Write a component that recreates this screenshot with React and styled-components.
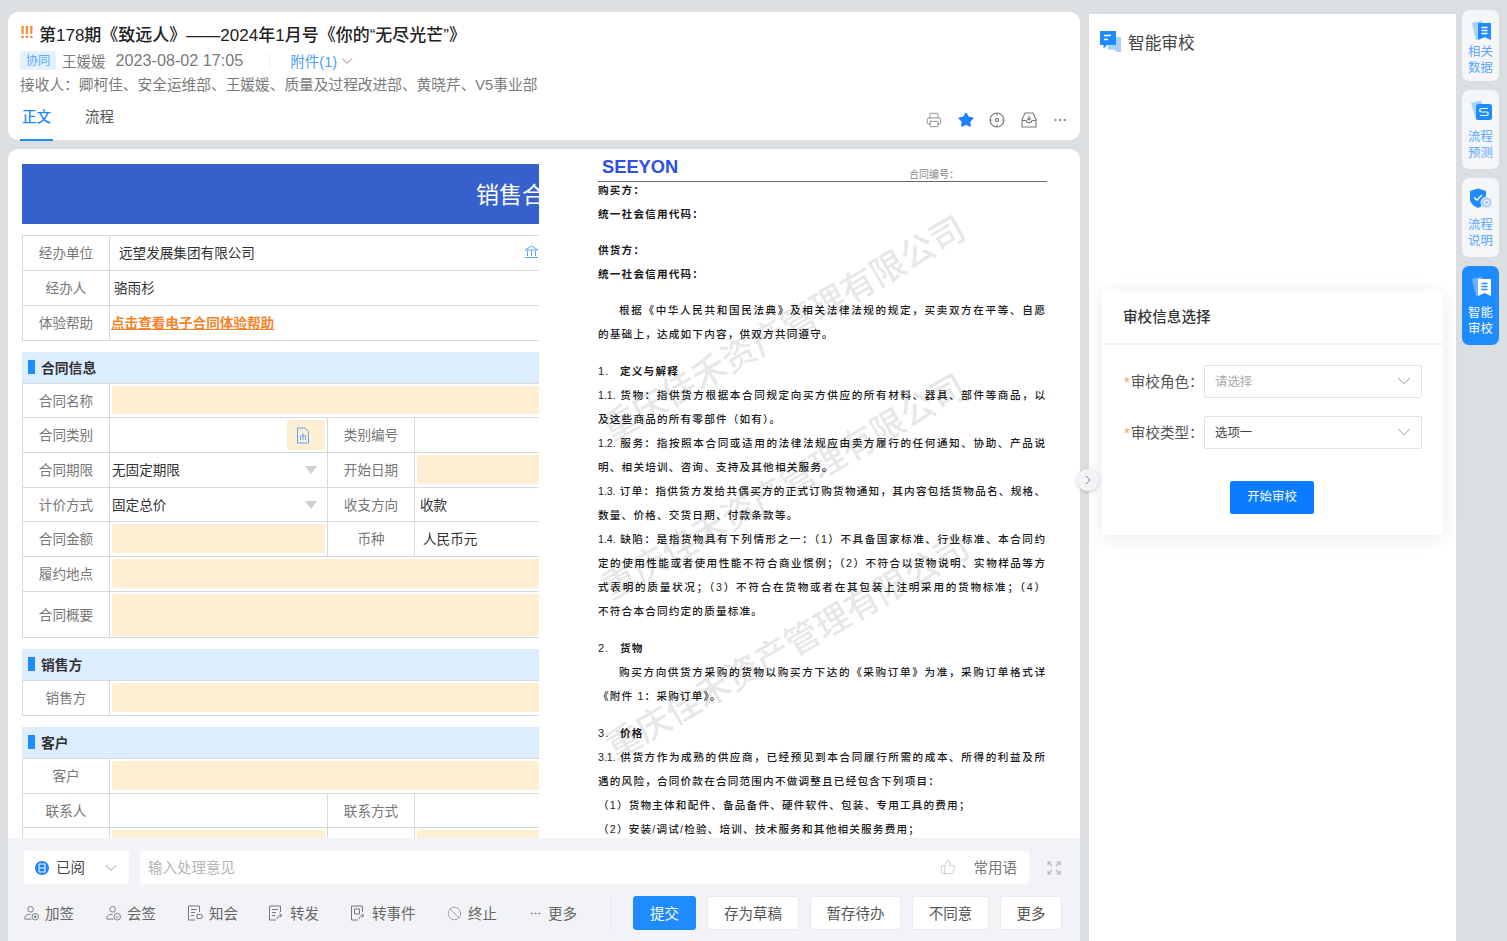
import React from "react";
import styled, { createGlobalStyle } from "styled-components";
import { Printer, Star, Ellipsis, ChevronDown, ChevronRight, ThumbsUp, Ban } from "lucide-react";

const GlobalStyle = createGlobalStyle`
  html, body { margin: 0; padding: 0; height: 100%; overflow: hidden; }
  body { font-family: "Liberation Sans", "Noto Sans CJK SC", sans-serif; background: #dcdfe2; color: #333; }
  * { box-sizing: border-box; }
`;

const Page = styled.div`
  display: flex;
  height: 941px;
  width: 1507px;
  padding-left: 8px;
  overflow: hidden;
  background: #dcdfe2;
`;

const Main = styled.div`
  display: flex;
  flex-direction: column;
  width: 1072px;
  height: 100%;
  padding-top: 12px;
  flex: none;
`;

const Header = styled.header`
  position: relative;
  height: 128px;
  flex: none;
  background: #fff;
  border-radius: 10px;
  padding: 11px 12px 0;
`;

const TitleRow = styled.div`
  display: flex;
  align-items: center;
  gap: 8px;
  height: 20px;
`;

const Bangs = styled.span`
  width: 11px;
  font-size: 16px;
  font-weight: 700;
  letter-spacing: -1px;
  color: #f5882a;
  line-height: 1;
`;

const Title = styled.h1`
  margin: 0;
  font-size: 17px;
  font-weight: 500;
  color: #222;
  white-space: nowrap;
`;

const MetaRow = styled.div`
  display: flex;
  align-items: center;
  height: 19px;
  margin-top: 8px;
  font-size: 14.5px;
  color: #7a7a7a;
`;

const Tag = styled.span`
  width: 36px;
  height: 19px;
  margin-right: 6px;
  background: #e4f1ff;
  color: #5aa6ff;
  border-radius: 2px;
  font-size: 12.3px;
  line-height: 21px;
  text-align: center;
`;

const MetaDate = styled.span`
  margin-left: 10px;
  font-size: 16.2px;
`;

const MetaDivider = styled.span`
  width: 1px;
  height: 15px;
  margin: 0 20px 0 26px;
  background: #eceef1;
`;

const AttachLink = styled.span`
  display: flex;
  align-items: center;
  gap: 1px;
  color: #4c9dff;
`;

const Receivers = styled.div`
  margin-top: 5px;
  height: 20px;
  font-size: 14.7px;
  line-height: 20px;
  color: #7a7a7a;
  white-space: nowrap;
`;

const Tabs = styled.nav`
  display: flex;
  gap: 34px;
  margin-top: 12px;
  padding-left: 2px;
`;

const Tab = styled.span`
  position: relative;
  font-size: 14.5px;
  line-height: 20px;
  color: ${(props) => (props.active ? "#1e8bff" : "#555")};
  font-weight: ${(props) => (props.active ? 500 : 400)};

  &::after {
    content: "";
    display: ${(props) => (props.active ? "block" : "none")};
    position: absolute;
    left: -2px;
    right: -2px;
    top: 32px;
    height: 2px;
    background: #1e8bff;
  }
`;

const HeaderTools = styled.div`
  position: absolute;
  right: 12px;
  bottom: 12px;
  display: flex;
  align-items: center;
  gap: 15.5px;
  color: #777;
`;

const DocPanel = styled.section`
  flex: 1;
  min-height: 0;
  margin-top: 9px;
  background: #fff;
  border-radius: 10px 10px 0 0;
  display: flex;
  flex-direction: column;
  overflow: hidden;
`;

const DocBody = styled.div`
  flex: 1;
  min-height: 0;
  display: flex;
  overflow: hidden;
`;

const FormPane = styled.div`
  width: 531px;
  flex: none;
  padding: 15px 0 0 14px;
  overflow: hidden;
`;

const FormInner = styled.div`
  width: 530px;
`;

const Banner = styled.div`
  height: 60px;
  background: #3661cc;
  color: #fff;
  font-size: 23px;
  line-height: 63px;
  padding-left: 454px;
  white-space: nowrap;
  margin-bottom: 11px;
`;

const Table = styled.div`
  border-left: 1px solid #d9d9d9;
  border-top: ${(props) => (props.plain ? "1px solid #d9d9d9" : "none")};
  margin-bottom: ${(props) => props.gap || 0}px;
`;

const Row = styled.div`
  display: grid;
  grid-template-columns: ${(props) => (props.split ? "87px 218px 87px 1fr" : "87px 1fr")};
  height: ${(props) => props.h || 35}px;
  border-bottom: 1px solid #d9d9d9;
`;

const Label = styled.div`
  display: flex;
  align-items: center;
  justify-content: center;
  padding-bottom: 2px;
  border-right: 1px solid #d9d9d9;
  font-size: 13.6px;
  color: #777;
`;

const Value = styled.div`
  display: flex;
  align-items: center;
  justify-content: space-between;
  padding: 0 ${(props) => props.pr ?? 2}px 2px ${(props) => props.pl ?? 2}px;
  font-size: 13.6px;
  color: #333;
  border-right: ${(props) => (props.divider ? "1px solid #d9d9d9" : "none")};
  min-width: 0;
`;

const Fill = styled.div`
  flex: 1;
  align-self: stretch;
  margin: 2px 0 ${(props) => (props.tall ? -1 : 1)}px;
  background: #feefd3;
  border-radius: 3px;
`;

const PickerFill = styled.div`
  width: 38px;
  height: 30px;
  margin-top: 2px;
  background: #feefd3;
  border-radius: 3px;
  display: flex;
  align-items: center;
  justify-content: center;
  padding-right: 6px;
`;

const Caret = styled.span`
  width: 0;
  height: 0;
  margin: 2px 8px 0 0;
  border-left: 6px solid transparent;
  border-right: 6px solid transparent;
  border-top: 8px solid #cfcfcf;
`;

const HelpLink = styled.span`
  color: #f5842b;
  font-weight: 700;
  text-decoration: underline;
  font-size: 13.6px;
`;

const Section = styled.div`
  display: flex;
  align-items: center;
  gap: 6px;
  height: 32px;
  padding: 0 0 2px 6px;
  background: #dcedff;
  border-bottom: 1px solid #d9d9d9;
  font-size: 13.8px;
  font-weight: 700;
  color: #333;

  &::before {
    content: "";
    width: 7px;
    height: 14px;
    background: #1e8bff;
  }
`;

const DocPane = styled.div`
  position: relative;
  flex: none;
  width: 541px;
  padding: 3px 0 0 59px;
  overflow: hidden;
`;

const DocHead = styled.div`
  position: relative;
  width: 449px;
  height: 30px;
  margin-bottom: -4px;
  border-bottom: 1px solid #666;
  display: flex;
  align-items: center;
`;

const Logo = styled.span`
  margin-left: 4px;
  font-size: 18.3px;
  font-weight: 700;
  color: #2d50e6;
`;

const DocNo = styled.span`
  position: absolute;
  left: 311px;
  bottom: 0;
  font-size: 10px;
  color: #888;
`;

const DocLine = styled.div`
  width: ${(props) => (props.full ? "447px" : "auto")};
  height: 24px;
  margin-top: ${(props) => props.gap || 0}px;
  padding-left: ${(props) => (props.indent ? 21 : 0)}px;
  font-size: 10.6px;
  line-height: 24px;
  color: #1a1a1a;
  font-weight: ${(props) => (props.strong ? 700 : 500)};
  letter-spacing: ${(props) => (props.full ? 0 : 1.2)}px;
  white-space: nowrap;
  text-align: ${(props) => (props.full ? "justify" : "left")};
  text-align-last: ${(props) => (props.full ? "justify" : "left")};
`;

const DocNum = styled.span`
  display: inline-block;
  width: 22px;
  font-weight: 400;
  font-size: 11px;
`;

const Watermark = styled.div`
  position: absolute;
  left: ${(props) => props.x}px;
  top: ${(props) => props.y}px;
  font-size: 34.4px;
  font-weight: 500;
  line-height: 1;
  color: rgba(0, 0, 0, 0.11);
  white-space: nowrap;
  transform: rotate(-30deg);
  transform-origin: left center;
  pointer-events: none;
`;

const ActionBar = styled.footer`
  flex: none;
  height: 103px;
  background: #f1f3f7;
  padding: 13px 0 0 16px;
`;

const OpinionRow = styled.div`
  display: flex;
  align-items: center;
  height: 33px;
`;

const StateSelect = styled.div`
  display: flex;
  align-items: center;
  width: 105px;
  height: 33px;
  padding: 0 0 2px 11px;
  background: #fff;
  border-radius: 3px;
  font-size: 14.5px;
  color: #444;
`;

const StateDot = styled.span`
  width: 14px;
  height: 14px;
  margin: 2px 7px 0 0;
  flex: none;
  border-radius: 50%;
  background: #1e7fff;
  display: flex;
  align-items: center;
  justify-content: center;
`;

const StateChevron = styled(ChevronDown)`
  margin: 2px 0 0 16px;
`;

const OpinionInput = styled.div`
  display: flex;
  align-items: center;
  width: 889px;
  height: 33px;
  margin-left: 11px;
  padding: 0 12px 2px 8px;
  background: #fff;
  border-radius: 3px;
  font-size: 14.5px;
  color: #b4b4b4;
`;

const Phrases = styled.span`
  margin-left: auto;
  display: flex;
  align-items: center;
  gap: 18px;
  color: #777;
`;

const ExpandBox = styled.span`
  display: flex;
  margin-left: 18px;
  color: #b5b8bd;
`;

const ActionRow = styled.div`
  display: flex;
  align-items: center;
  height: 34px;
  margin-top: 12px;
`;

const LinkActions = styled.div`
  display: flex;
  align-items: center;
  width: 588px;
  height: 100%;
  border-right: 1px solid #e4e6ea;
`;

const LinkAction = styled.span`
  display: flex;
  align-items: center;
  gap: 6px;
  width: ${(props) => props.w}px;
  padding-bottom: 2px;
  font-size: 14.5px;
  color: #666;
  white-space: nowrap;

  svg {
    flex: none;
    margin-top: 2px;
  }
`;

const Buttons = styled.div`
  display: flex;
  align-items: center;
  gap: 11px;
  margin-left: 21px;
`;

const Button = styled.span`
  display: flex;
  align-items: center;
  justify-content: center;
  width: ${(props) => props.w}px;
  height: 34px;
  padding-bottom: 2px;
  font-size: 14.5px;
  border-radius: 3px;
  background: ${(props) => (props.primary ? "#1e8bff" : "#fff")};
  color: ${(props) => (props.primary ? "#fff" : "#555")};
  border: 1px solid ${(props) => (props.primary ? "#1e8bff" : "#e8eaee")};
`;

const Collapse = styled.span`
  position: absolute;
  left: 1077px;
  top: 469px;
  width: 22px;
  height: 22px;
  border-radius: 50%;
  background: #f1f3f7;
  box-shadow: 0 1px 4px rgba(0, 0, 0, 0.18);
  display: flex;
  align-items: center;
  justify-content: center;
  color: #666;
`;

const ReviewPanel = styled.aside`
  width: 367px;
  flex: none;
  margin: 14px 0 0 9px;
  background: #fff;
  padding: 16px 13px 0 11px;
`;

const ReviewHead = styled.div`
  display: flex;
  align-items: center;
  gap: 7px;
  height: 24px;
  padding-bottom: 1px;
  font-size: 16.7px;
  color: #444;
`;

const ReviewCard = styled.div`
  width: 341px;
  height: 244px;
  margin: 237px 0 0 2px;
  background: #fff;
  box-shadow: 0 3px 18px rgba(30, 50, 90, 0.1);
  border-radius: 2px;
`;

const CardTitle = styled.div`
  height: 54px;
  padding-left: 21px;
  border-bottom: 2px solid #f2f3f7;
  font-size: 14.6px;
  font-weight: 500;
  line-height: 52px;
  color: #333;
`;

const FieldList = styled.div`
  display: flex;
  flex-direction: column;
  gap: 18px;
  padding: 20px 21px 0 22px;
`;

const Field = styled.div`
  display: flex;
  align-items: center;
  height: 33px;
`;

const FieldLabel = styled.label`
  width: 80px;
  padding-bottom: 2px;
  font-size: 14.6px;
  color: #555;
  white-space: nowrap;

  &::before {
    content: "*";
    color: #f5a04a;
    margin-right: 1px;
  }
`;

const SelectBox = styled.div`
  display: flex;
  align-items: center;
  justify-content: space-between;
  width: 218px;
  height: 33px;
  padding: 0 6px 1px 10px;
  border: 1px solid #dfe1e5;
  border-radius: 2px;
  font-size: 12.4px;
  color: ${(props) => (props.$empty ? "#aaa" : "#444")};
`;

const StartWrap = styled.div`
  display: flex;
  justify-content: center;
  margin-top: 32px;
`;

const StartButton = styled.span`
  width: 84px;
  height: 33px;
  margin-left: -1px;
  border-radius: 2px;
  background: #0a7cff;
  color: #fff;
  font-size: 12.4px;
  line-height: 32px;
  text-align: center;
`;

const Rail = styled.div`
  display: flex;
  flex-direction: column;
  gap: 9px;
  width: 37px;
  flex: none;
  margin: 10px 0 0 6px;
`;

const RailItem = styled.div`
  display: flex;
  flex-direction: column;
  align-items: center;
  width: 37px;
  height: ${(props) => props.h}px;
  padding-top: 10px;
  border-radius: 7px;
  background: ${(props) => (props.active ? "#1e8bff" : "#f5f6f8")};
  color: ${(props) => (props.active ? "#fff" : "#5aa6ff")};
  font-size: 12.4px;
  line-height: 15.6px;
  text-align: center;

  svg {
    flex: none;
    margin-bottom: ${(props) => props.iconGap}px;
  }
`;

const PrioIcon = () => <Bangs>!!!</Bangs>;

const CompassIcon = () => (
  <svg width="16" height="16" viewBox="0 0 16 16" fill="none" stroke="#777" strokeWidth="1.1">
    <circle cx="8" cy="8" r="7" />
    <circle cx="8" cy="8" r="1.6" />
    <path d="M8 1v2.4M8 12.6V15M1 8h2.4M12.6 8H15" />
  </svg>
);

const TrayIcon = () => (
  <svg width="16" height="16" viewBox="0 0 16 16" fill="none" stroke="#777" strokeWidth="1.1">
    <path d="M4 1H12L15 7.5V15H1V7.5Z" />
    <path d="M1 8.5H5L6 10.5H10L11 8.5H15" />
    <path d="M8 3.5V8M6.2 6.4L8 8.2L9.8 6.4" />
  </svg>
);

const BankIcon = () => (
  <svg width="15" height="14" viewBox="0 0 15 14" fill="none" stroke="#5aa6ff" strokeWidth="1">
    <path d="M1 5L7.5 1L14 5Z" />
    <path d="M3.5 5.5V11M7.5 5.5V11M11.5 5.5V11M1 12.5H14" />
  </svg>
);

const PickIcon = () => (
  <svg width="14" height="17" viewBox="0 0 14 17" fill="none" stroke="#5aa6ff" strokeWidth="1">
    <path d="M1.5 1H9L12.5 4.5V16H1.5Z" />
    <path d="M3.5 9H10.5M7 6V13M4.5 13V10M9.5 13V10" />
  </svg>
);

const ReviewLogo = () => (
  <svg width="21" height="21" viewBox="0 0 21 21">
    <path d="M8 6H21V21H17L14 18.5H8Z" fill="#a9cffb" />
    <path d="M0 0H16V14H7L3.5 17.5V14H0Z" fill="#1e8bff" />
    <path d="M4 4.5H11M4 8.5H8" stroke="#fff" strokeWidth="1.6" />
  </svg>
);

const RailDoc = ({ color = "#1e8bff", back = "#a9cffb", mark = "#fff" }) => (
  <svg width="22" height="22" viewBox="0 0 22 22">
    <path d="M2 3L12 0.5L15 17L6 20Z" fill={back} />
    <path d="M8 3H21V20L14.5 17L8 20Z" fill={color} />
    <path d="M11.5 7.5H17.5M11.5 10.5H17.5M11.5 13.5H17.5" stroke={mark} strokeWidth="1.4" />
  </svg>
);

const RailFlow = () => (
  <svg width="22" height="22" viewBox="0 0 22 22">
    <path d="M1 3L11 0.5L14 17L6 20Z" fill="#a9cffb" />
    <rect x="6" y="4" width="16" height="16" rx="2.5" fill="#1e8bff" />
    <path d="M18 8.5H11.5A1.7 1.7 0 0 0 11.5 12H16.5A1.7 1.7 0 0 1 16.5 15.5H10" fill="none" stroke="#fff" strokeWidth="1.2" />
  </svg>
);

const RailShield = () => (
  <svg width="24" height="21" viewBox="0 0 24 21">
    <path d="M1 3L9 0.5L17 3V11C17 15 13 18.5 9 20C5 18.5 1 15 1 11Z" fill="#1e8bff" />
    <path d="M5 9.5L8 12L13 7" fill="none" stroke="#fff" strokeWidth="1.5" />
    <circle cx="17.5" cy="14.5" r="5.5" fill="#a9cffb" stroke="#f5f6f8" />
    <circle cx="17.5" cy="14.5" r="2.4" fill="none" stroke="#fff" />
  </svg>
);

const PersonPlus = ({ check }) => (
  <svg width="15" height="16" viewBox="0 0 16 16" fill="none" stroke="#777" strokeWidth="1">
    <circle cx="7" cy="4" r="3" />
    <path d="M1 14.5V12.5C1 10.5 3 9.5 7 9.5" />
    <path d="M1 14.5H8" />
    <circle cx="12" cy="12" r="3.5" />
    {check ? <path d="M10.4 12L11.6 13.2L13.6 11" /> : <path d="M10.2 12H13.8M12 10.2V13.8" />}
  </svg>
);

const NoteIcon = ({ kind }) => (
  <svg width="16" height="16" viewBox="0 0 16 16" fill="none" stroke="#777" strokeWidth="1">
    <path d="M12.5 7V1H1.5V15H8" />
    {kind === "event" ? (
      <path d="M4.5 4H9.5V9H4.5Z" />
    ) : (
      <path d="M4 4.5H10M4 7.5H8M4 10.5H7" />
    )}
    {kind === "notify" ? (
      <path d="M10 9.5H13.5A1.5 1.5 0 0 1 13.5 13.5H10Z" />
    ) : (
      <path d="M9 14C9.5 11.5 11 10.5 13 10.5M11.5 8.5L14 10.5L11.5 12.5" />
    )}
  </svg>
);

const CornersIcon = () => (
  <svg width="14" height="14" viewBox="0 0 14 14" fill="none" stroke="currentColor" strokeWidth="1.2">
    <path d="M1 4.5V1H4.5M1 1L5 5M13 4.5V1H9.5M13 1L9 5M1 9.5V13H4.5M1 13L5 9M13 9.5V13H9.5M13 13L9 9" />
  </svg>
);

const contractTop = [
  { label: "经办单位", value: "远望发展集团有限公司", pl: 9, icon: true },
  { label: "经办人", value: "骆雨杉", pl: 4 },
];

const docLines = [
  { text: "购买方：", strong: true },
  { text: "统一社会信用代码：", strong: true },
  { text: "供货方：", strong: true, gap: 12 },
  { text: "统一社会信用代码：", strong: true },
  { text: "根据《中华人民共和国民法典》及相关法律法规的规定，买卖双方在平等、自愿", gap: 12, indent: true, full: true },
  { text: "的基础上，达成如下内容，供双方共同遵守。" },
  { num: "1.", text: "定义与解释", strong: true, gap: 13 },
  { text: "1.1. 货物：指供货方根据本合同规定向买方供应的所有材料、器具、部件等商品，以", full: true },
  { text: "及这些商品的所有零部件（如有）。" },
  { text: "1.2. 服务：指按照本合同或适用的法律法规应由卖方履行的任何通知、协助、产品说", full: true },
  { text: "明、相关培训、咨询、支持及其他相关服务。" },
  { text: "1.3. 订单：指供货方发给共偶买方的正式订购货物通知，其内容包括货物品名、规格、", full: true },
  { text: "数量、价格、交货日期、付款条款等。" },
  { text: "1.4. 缺陷：是指货物具有下列情形之一：（1）不具备国家标准、行业标准、本合同约", full: true },
  { text: "定的使用性能或者使用性能不符合商业惯例；（2）不符合以货物说明、实物样品等方", full: true },
  { text: "式表明的质量状况；（3）不符合在货物或者在其包装上注明采用的货物标准；（4）", full: true },
  { text: "不符合本合同约定的质量标准。" },
  { num: "2.", text: "货物", strong: true, gap: 13 },
  { text: "购买方向供货方采购的货物以购买方下达的《采购订单》为准，采购订单格式详", indent: true, full: true },
  { text: "《附件 1：采购订单》。" },
  { num: "3.", text: "价格", strong: true, gap: 13 },
  { text: "3.1. 供货方作为成熟的供应商，已经预见到本合同履行所需的成本、所得的利益及所", full: true },
  { text: "遇的风险，合同价款在合同范围内不做调整且已经包含下列项目：" },
  { text: "（1）货物主体和配件、备品备件、硬件软件、包装、专用工具的费用；" },
  { text: "（2）安装/调试/检验、培训、技术服务和其他相关服务费用；" },
];

const watermarkText = "重庆佳禾资产管理有限公司";

const App = () => {
  return (
    <Page>
      <GlobalStyle />
      <Main>
        <Header>
          <TitleRow>
            <PrioIcon />
            <Title>第178期《致远人》——2024年1月号《你的“无尽光芒”》</Title>
          </TitleRow>
          <MetaRow>
            <Tag>协同</Tag>
            王媛媛
            <MetaDate>2023-08-02 17:05</MetaDate>
            <MetaDivider />
            <AttachLink>
              附件(1)
              <ChevronDown size={18} strokeWidth={1.1} color="#777" />
            </AttachLink>
          </MetaRow>
          <Receivers>接收人：卿柯佳、安全运维部、王媛媛、质量及过程改进部、黄晓芹、V5事业部</Receivers>
          <Tabs>
            <Tab active>正文</Tab>
            <Tab>流程</Tab>
          </Tabs>
          <HeaderTools>
            <Printer size={16} strokeWidth={1.2} />
            <Star size={16} fill="#1e7fff" color="#1e7fff" />
            <CompassIcon />
            <TrayIcon />
            <Ellipsis size={16} strokeWidth={1.4} />
          </HeaderTools>
        </Header>

        <DocPanel>
          <DocBody>
            <FormPane>
              <FormInner>
                <Banner>销售合同</Banner>
                <Table plain gap={11}>
                  {contractTop.map((row) => (
                    <Row key={row.label}>
                      <Label>{row.label}</Label>
                      <Value pl={row.pl} pr={13}>
                        {row.value}
                        {row.icon && <BankIcon />}
                      </Value>
                    </Row>
                  ))}
                  <Row>
                    <Label>体验帮助</Label>
                    <Value pl={1}>
                      <HelpLink>点击查看电子合同体验帮助</HelpLink>
                    </Value>
                  </Row>
                </Table>

                <Section>合同信息</Section>
                <Table gap={11}>
                  <Row h={34}>
                    <Label>合同名称</Label>
                    <Value><Fill /></Value>
                  </Row>
                  <Row split>
                    <Label>合同类别</Label>
                    <Value divider>
                      <span />
                      <PickerFill><PickIcon /></PickerFill>
                    </Value>
                    <Label>类别编号</Label>
                    <Value />
                  </Row>
                  <Row split>
                    <Label>合同期限</Label>
                    <Value divider>无固定期限<Caret /></Value>
                    <Label>开始日期</Label>
                    <Value><Fill /></Value>
                  </Row>
                  <Row split h={34}>
                    <Label>计价方式</Label>
                    <Value divider>固定总价<Caret /></Value>
                    <Label>收支方向</Label>
                    <Value pl={5}>收款</Value>
                  </Row>
                  <Row split>
                    <Label>合同金额</Label>
                    <Value divider><Fill /></Value>
                    <Label>币种</Label>
                    <Value pl={8}>人民币元</Value>
                  </Row>
                  <Row>
                    <Label>履约地点</Label>
                    <Value><Fill /></Value>
                  </Row>
                  <Row h={46}>
                    <Label>合同概要</Label>
                    <Value><Fill tall /></Value>
                  </Row>
                </Table>

                <Section>销售方</Section>
                <Table gap={11}>
                  <Row>
                    <Label>销售方</Label>
                    <Value><Fill /></Value>
                  </Row>
                </Table>

                <Section>客户</Section>
                <Table>
                  <Row>
                    <Label>客户</Label>
                    <Value><Fill /></Value>
                  </Row>
                  <Row split h={34}>
                    <Label>联系人</Label>
                    <Value divider />
                    <Label>联系方式</Label>
                    <Value />
                  </Row>
                  <Row split>
                    <Label />
                    <Value divider><Fill /></Value>
                    <Label />
                    <Value><Fill /></Value>
                  </Row>
                </Table>
              </FormInner>
            </FormPane>

            <DocPane>
              <DocHead>
                <Logo>SEEYON</Logo>
                <DocNo>合同编号：</DocNo>
              </DocHead>
              {docLines.map((line, i) => (
                <DocLine key={i} strong={line.strong} gap={line.gap} indent={line.indent} full={line.full}>
                  {line.num && <DocNum>{line.num}</DocNum>}
                  {line.text}
                </DocLine>
              ))}
              <Watermark x={66} y={266}>{watermarkText}</Watermark>
              <Watermark x={66} y={424}>{watermarkText}</Watermark>
              <Watermark x={70} y={584}>{watermarkText}</Watermark>
            </DocPane>
          </DocBody>

          <ActionBar>
            <OpinionRow>
              <StateSelect>
                <StateDot>
                  <svg width="8" height="10" viewBox="0 0 8 10" fill="none" stroke="#fff" strokeWidth="1">
                    <path d="M1 1H7V9H1ZM1 5H7" />
                  </svg>
                </StateDot>
                已阅
                <StateChevron size={20} strokeWidth={1} color="#888" />
              </StateSelect>
              <OpinionInput>
                输入处理意见
                <Phrases>
                  <ThumbsUp size={16} strokeWidth={1} color="#b5b8bd" />
                  常用语
                </Phrases>
              </OpinionInput>
              <ExpandBox><CornersIcon /></ExpandBox>
            </OpinionRow>
            <ActionRow>
              <LinkActions>
                <LinkAction w={82}><PersonPlus />加签</LinkAction>
                <LinkAction w={81}><PersonPlus check />会签</LinkAction>
                <LinkAction w={81}><NoteIcon kind="notify" />知会</LinkAction>
                <LinkAction w={82}><NoteIcon />转发</LinkAction>
                <LinkAction w={97}><NoteIcon kind="event" />转事件</LinkAction>
                <LinkAction w={82}><Ban size={15} strokeWidth={1} color="#777" />终止</LinkAction>
                <LinkAction w={50}><Ellipsis size={13} strokeWidth={1.3} color="#777" />更多</LinkAction>
              </LinkActions>
              <Buttons>
                <Button primary w={63}>提交</Button>
                <Button w={92}>存为草稿</Button>
                <Button w={91}>暂存待办</Button>
                <Button w={77}>不同意</Button>
                <Button w={62}>更多</Button>
              </Buttons>
            </ActionRow>
          </ActionBar>
        </DocPanel>
      </Main>

      <Collapse><ChevronRight size={16} strokeWidth={1.2} /></Collapse>

      <ReviewPanel>
        <ReviewHead>
          <ReviewLogo />
          智能审校
        </ReviewHead>
        <ReviewCard>
          <CardTitle>审校信息选择</CardTitle>
          <FieldList>
            <Field>
              <FieldLabel>审校角色：</FieldLabel>
              <SelectBox $empty>
                请选择
                <ChevronDown size={22} strokeWidth={0.9} color="#888" />
              </SelectBox>
            </Field>
            <Field>
              <FieldLabel>审校类型：</FieldLabel>
              <SelectBox>
                选项一
                <ChevronDown size={22} strokeWidth={0.9} color="#888" />
              </SelectBox>
            </Field>
          </FieldList>
          <StartWrap>
            <StartButton>开始审校</StartButton>
          </StartWrap>
        </ReviewCard>
      </ReviewPanel>

      <Rail>
        <RailItem h={71} iconGap={3}><RailDoc />相关<br />数据</RailItem>
        <RailItem h={79} iconGap={8}><RailFlow />流程<br />预测</RailItem>
        <RailItem h={79} iconGap={9}><RailShield />流程<br />说明</RailItem>
        <RailItem h={79} iconGap={8} active>
          <RailDoc color="#fff" back="#6fb2fb" mark="#1e8bff" />
          智能<br />审校
        </RailItem>
      </Rail>
    </Page>
  );
};

export default App;
